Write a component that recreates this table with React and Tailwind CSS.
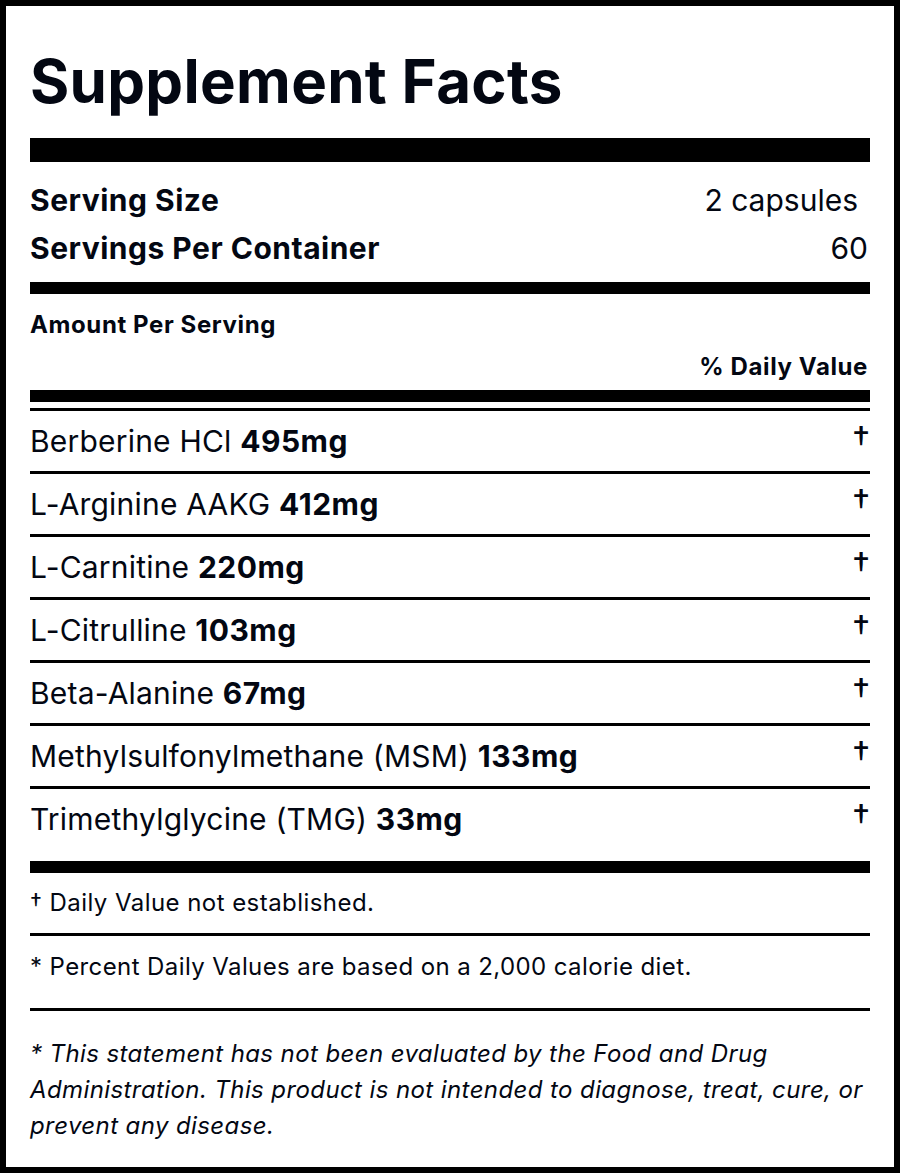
import React from "react";

const ingredients = [
  { name: "Berberine HCl", amount: "495mg" },
  { name: "L-Arginine AAKG", amount: "412mg" },
  { name: "L-Carnitine", amount: "220mg" },
  { name: "L-Citrulline", amount: "103mg" },
  { name: "Beta-Alanine", amount: "67mg" },
  { name: "Methylsulfonylmethane (MSM)", amount: "133mg" },
  { name: "Trimethylglycine (TMG)", amount: "33mg" },
];

const App = () => {
  return (
    <div className="min-h-screen bg-white font-[Inter,sans-serif] text-gray-950 antialiased">
      <div className="border-[6px] border-black bg-white px-6 pt-6 pb-[23px]">
        <h1 className="mt-[21px] mb-[27px] text-[60px] font-bold leading-none tracking-[0.3px]">
          Supplement Facts
        </h1>

        <div className="h-6 bg-black"></div>

        {/* serving info */}
        <div className="pt-[14px] pb-[10px] text-[30px] leading-[48px]">
          <div className="flex justify-between">
            <span className="font-bold tracking-[0.5px]">Serving Size</span>
            <span className="mr-3">2 capsules</span>
          </div>
          <div className="flex justify-between">
            <span className="font-bold tracking-[0.5px]">Servings Per Container</span>
            <span className="mr-[2px]">60</span>
          </div>
        </div>

        <div className="h-3 bg-black"></div>

        <div className="pt-[15px] pb-[7px] text-[24px] font-bold leading-[32px] tracking-wide">
          <div>Amount Per Serving</div>
          <div className="mt-[10px] text-right mr-[2px]">% Daily Value</div>
        </div>

        <div className="h-3 bg-black"></div>
        <div className="mt-[6px] h-[3px] bg-black"></div>

        {/* ingredient rows */}
        <div>
          {ingredients.map((item, i) => (
            <div
              key={item.name}
              className={
                "flex items-center justify-between text-[30px] " +
                (i < ingredients.length - 1 ? "h-[63px] border-b-[3px] border-black" : "h-[60px]")
              }
            >
              <span className="tracking-[0.2px]">
                {item.name} <span className="font-bold tracking-[0.5px]">{item.amount}</span>
              </span>
              <span className="self-start mt-[10px] text-[36px] leading-none">†</span>
            </div>
          ))}
        </div>

        <div className="mt-3 h-3 bg-black"></div>

        {/* footnotes */}
        <div className="flex h-[63px] items-center border-b-[3px] border-black text-[24px] tracking-[0.45px]">
          <span>† Daily Value not established.</span>
        </div>
        <div className="border-b-[3px] border-black pt-[15px] pb-[25px] text-[24px] leading-[32px] tracking-[0.4px]">
          * Percent Daily Values are based on a 2,000 calorie diet.
        </div>
        <p className="pt-[25px] text-[24px] italic leading-[36px] tracking-[0.4px]">
          * This statement has not been evaluated by the Food and Drug
          Administration. This product is not intended to diagnose, treat,
          cure, or prevent any disease.
        </p>
      </div>
    </div>
  );
};

export default App;
